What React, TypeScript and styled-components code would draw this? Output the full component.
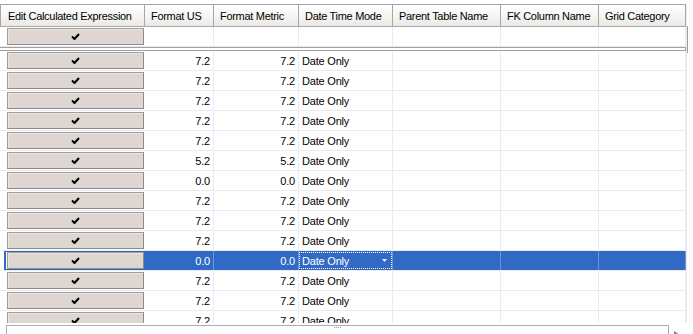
import React from "react";
import styled, { createGlobalStyle, css } from "styled-components";

const GlobalStyle = createGlobalStyle`
  html, body { margin: 0; padding: 0; background: #fff; }
  body {
    font-family: "Liberation Sans", Arial, sans-serif;
    font-size: 11px;
    color: #000;
    overflow: hidden;
  }
`;

const COLS = "145px 69px 85px 94px 108px 98px 87px";
const GRID_LINE = "#ebe9f1";
const SEL = "#316ac5";

const Page = styled.div`
  width: 693px;
  height: 334px;
  box-sizing: border-box;
  padding-top: 4px;
  display: flex;
  flex-direction: column;
  overflow: hidden;
`;

const Main = styled.div`
  flex: 1;
  min-height: 0;
  display: flex;
`;

const GridArea = styled.div`
  width: 686px;
  display: flex;
  flex-direction: column;
`;

const HeaderRow = styled.div`
  display: grid;
  grid-template-columns: ${COLS};
  height: 23px;
  box-sizing: border-box;
  border-top: 1px solid #a7a6aa;
  border-bottom: 1px solid #a7a6aa;
`;

const HeaderCell = styled.div<{ $first?: boolean }>`
  display: flex;
  align-items: center;
  padding-left: ${(p) => (p.$first ? "7px" : "6px")};
  box-sizing: border-box;
  background: linear-gradient(#ffffff, #f2f1ee 70%, #e9e8e4);
  border-right: 1px solid #a7a6aa;
  ${(p) => p.$first && css`border-left: 1px solid #a7a6aa;`}
  letter-spacing: -0.3px;
  white-space: nowrap;
  overflow: hidden;
`;

const Row = styled.div<{ $selected?: boolean }>`
  display: grid;
  grid-template-columns: ${COLS};
  height: 20px;
  box-sizing: border-box;
  border-bottom: 1px solid ${GRID_LINE};
  flex-shrink: 0;
`;

const FirstCell = styled.div`
  display: flex;
  padding-left: 4px;
  box-sizing: border-box;
`;

const Frame = styled.div<{ $selected?: boolean }>`
  flex: 1;
  display: flex;
  box-sizing: border-box;
  border: 1px solid ${(p) => (p.$selected ? SEL : "transparent")};
  border-left-width: 2px;
  padding-left: 1px;
`;

const CheckButton = styled.div`
  flex: 1;
  display: flex;
  align-items: center;
  justify-content: center;
  box-sizing: border-box;
  background: #ddd6d1;
  border: 1px solid #a29d98;
  border-bottom-color: #8f8a86;
  border-right-color: #8f8a86;
  box-shadow: inset 1px 1px 0 #ebe6e2;
`;

const Cell = styled.div<{ $align?: "left" | "right"; $selected?: boolean }>`
  display: flex;
  align-items: center;
  justify-content: ${(p) => (p.$align === "right" ? "flex-end" : "flex-start")};
  padding: 0 3px;
  box-sizing: border-box;
  border-right: 1px solid ${(p) => (p.$selected ? "#6d93d4" : GRID_LINE)};
  background: ${(p) => (p.$selected ? SEL : "#fff")};
  color: ${(p) => (p.$selected ? "#fff" : "#000")};
  letter-spacing: -0.2px;
  white-space: nowrap;
  overflow: hidden;
`;

const FocusCell = styled(Cell)`
  padding: 0;
`;

const FocusBox = styled.div`
  flex: 1;
  align-self: stretch;
  display: flex;
  align-items: center;
  justify-content: space-between;
  margin: 1px 0;
  padding: 0 4px 0 2px;
  border: 1px dotted #ffffff;
`;

const Separator = styled.div`
  height: 4px;
  box-sizing: border-box;
  border: 1px solid #a0a0a0;
  border-left: none;
  background: #fff;
  flex-shrink: 0;
`;

const Body = styled.div`
  flex: 1;
  min-height: 0;
  overflow: hidden;
  display: flex;
  flex-direction: column;
`;

const VScroll = styled.div`
  width: 7px;
  display: flex;
  flex-direction: column;
  padding-top: 22px;
  box-sizing: border-box;
  border-left: 1px solid ${GRID_LINE};
`;

const VThumb = styled.div`
  height: 27px;
  border-left: 1px solid #9d9d9d;
`;

const HScroll = styled.div`
  height: 11px;
  flex-shrink: 0;
  display: flex;
  align-items: flex-start;
  padding: 2px 0 0 6px;
  box-sizing: border-box;
`;

const HThumb = styled.div`
  width: 663px;
  height: 9px;
  box-sizing: border-box;
  border: 1px solid #aeaeb2;
  border-bottom: none;
  display: flex;
  justify-content: center;
  padding-top: 1px;
`;

const Grip = styled.div`
  width: 8px;
  height: 1px;
  background: repeating-linear-gradient(90deg, #9a9a9a 0 1px, transparent 1px 2px);
`;

const ArrowSlot = styled.div`
  margin-left: 5px;
  padding-top: 1px;
`;

const Check = () => (
  <svg width="9" height="7" viewBox="0 0 9 7">
    <path d="M1 3.5 L3.5 6 L8 1" fill="none" stroke="#000" strokeWidth="2" />
  </svg>
);

const DropArrow = () => (
  <svg width="5" height="3" viewBox="0 0 5 3">
    <path d="M0 0 H5 L2.5 3 Z" fill="#e8eefa" />
  </svg>
);

const headers = [
  "Edit Calculated Expression",
  "Format US",
  "Format Metric",
  "Date Time Mode",
  "Parent Table Name",
  "FK Column Name",
  "Grid Category",
];

const values = ["7.2", "7.2", "7.2", "7.2", "7.2", "5.2", "0.0", "7.2", "7.2", "7.2", "0.0", "7.2", "7.2", "7.2"];
const SELECTED = 10;

export default function App() {
  return (
    <>
      <GlobalStyle />
      <Page>
        <Main>
          <GridArea>
            <HeaderRow>
              {headers.map((h, i) => (
                <HeaderCell key={h} $first={i === 0}>
                  {h}
                </HeaderCell>
              ))}
            </HeaderRow>
            <Row>
              <FirstCell>
                <Frame>
                  <CheckButton>
                    <Check />
                  </CheckButton>
                </Frame>
              </FirstCell>
              <Cell />
              <Cell />
              <Cell />
              <Cell />
              <Cell />
              <Cell />
            </Row>
            <Separator />
            <Body>
              {values.map((v, i) => {
                const sel = i === SELECTED;
                return (
                  <Row key={i} $selected={sel}>
                    <FirstCell>
                      <Frame $selected={sel}>
                        <CheckButton>
                          <Check />
                        </CheckButton>
                      </Frame>
                    </FirstCell>
                    <Cell $align="right" $selected={sel}>{v}</Cell>
                    <Cell $align="right" $selected={sel}>{v}</Cell>
                    {sel ? (
                      <FocusCell $selected>
                        <FocusBox>
                          <span>Date Only</span>
                          <DropArrow />
                        </FocusBox>
                      </FocusCell>
                    ) : (
                      <Cell>Date Only</Cell>
                    )}
                    <Cell $selected={sel} />
                    <Cell $selected={sel} />
                    <Cell $selected={sel} />
                  </Row>
                );
              })}
            </Body>
          </GridArea>
          <VScroll>
            <VThumb />
          </VScroll>
        </Main>
        <HScroll>
          <HThumb>
            <Grip />
          </HThumb>
          <ArrowSlot>
            <svg width="4" height="5" viewBox="0 0 4 5">
              <path d="M0 0 L4 2.5 L0 5 Z" fill="#8a8a8a" />
            </svg>
          </ArrowSlot>
        </HScroll>
      </Page>
    </>
  );
}
